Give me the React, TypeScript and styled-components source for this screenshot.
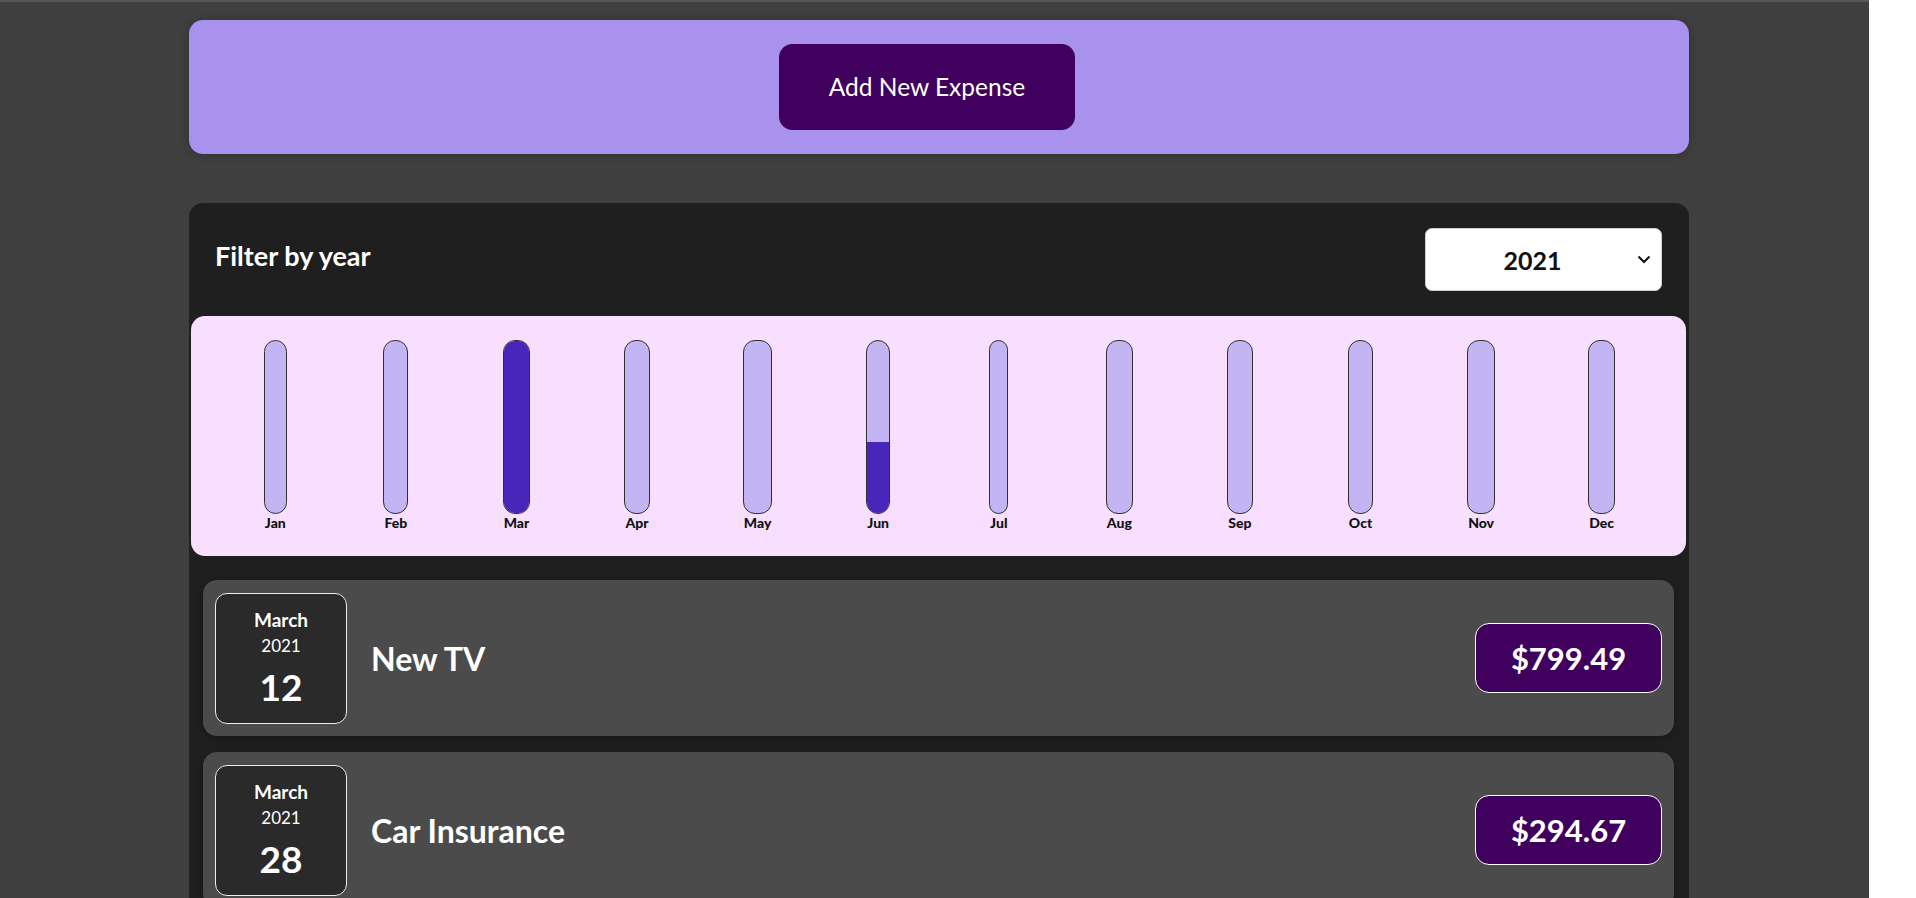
import React, { ChangeEvent, useState } from 'react';
import styled, { createGlobalStyle } from 'styled-components';

interface Expense {
	id: string;
	title: string;
	amount: number;
	date: Date;
}

const EXPENSES: Expense[] = [
	{ id: 'e1', title: 'New TV', amount: 799.49, date: new Date(2021, 2, 12) },
	{ id: 'e2', title: 'Car Insurance', amount: 294.67, date: new Date(2021, 2, 28) },
];

// fill level of each month bar, in percent
const CHART = [
	{ label: 'Jan', fill: 0 },
	{ label: 'Feb', fill: 0 },
	{ label: 'Mar', fill: 100 },
	{ label: 'Apr', fill: 0 },
	{ label: 'May', fill: 0 },
	{ label: 'Jun', fill: 41 },
	{ label: 'Jul', fill: 0 },
	{ label: 'Aug', fill: 0 },
	{ label: 'Sep', fill: 0 },
	{ label: 'Oct', fill: 0 },
	{ label: 'Nov', fill: 0 },
	{ label: 'Dec', fill: 0 },
];

const CHEVRON =
	"url(\"data:image/svg+xml;utf8,<svg xmlns='http://www.w3.org/2000/svg' width='14' height='9' viewBox='0 0 14 9'><path d='M1.5 1.5 L7 7 L12.5 1.5' fill='none' stroke='%23111' stroke-width='2'/></svg>\")";

const GlobalStyle = createGlobalStyle`
	html, body {
		margin: 0;
		padding: 0;
		background: #ffffff;
		overflow: hidden;
	}
	body {
		font-family: Lato, 'Noto Sans', sans-serif;
	}
	* {
		box-sizing: border-box;
	}
`;

const ExpenseDate = ({ date }: { date: Date }) => {
	const month = date.toLocaleString('en-US', { month: 'long' });
	return (
		<DateBox>
			<DateMonth>{month}</DateMonth>
			<DateYear>{date.getFullYear()}</DateYear>
			<DateDay>{date.getDate()}</DateDay>
		</DateBox>
	);
};

const App = () => {
	const [year, setYear] = useState('2021');

	const handleYearChange = (e: ChangeEvent<HTMLSelectElement>) => {
		setYear(e.target.value);
	};

	return (
		<Page>
			<GlobalStyle />
			<NewExpense>
				<AddButton type="button">Add New Expense</AddButton>
			</NewExpense>
			<Expenses>
				<FilterRow>
					<FilterLabel>Filter by year</FilterLabel>
					<YearSelect value={year} onChange={handleYearChange}>
						<option value="2022">2022</option>
						<option value="2021">2021</option>
						<option value="2020">2020</option>
						<option value="2019">2019</option>
					</YearSelect>
				</FilterRow>
				<Chart>
					{CHART.map((m) => (
						<ChartColumn key={m.label}>
							<BarStack>
								<BarInner>
									<BarFill style={{ height: `${m.fill}%` }} />
								</BarInner>
								<BarLabel>{m.label}</BarLabel>
							</BarStack>
						</ChartColumn>
					))}
				</Chart>
				<ExpenseList>
					{EXPENSES.map((item) => (
						<ExpenseItem key={item.id}>
							<ExpenseDate date={item.date} />
							<ItemTitle>{item.title}</ItemTitle>
							<Price>${item.amount}</Price>
						</ExpenseItem>
					))}
				</ExpenseList>
			</Expenses>
		</Page>
	);
};

export default App;

const Page = styled.div`
	width: 1869px;
	height: 898px;
	background-color: #3f3f3f;
	border-top: 2px solid #585858;
	padding: 18px 0 0 189px;
	overflow: hidden;
`;

const NewExpense = styled.div`
	width: 1500px;
	height: 134px;
	background-color: #a892ee;
	border-radius: 14px;
	box-shadow: 0 1px 8px rgba(0, 0, 0, 0.25);
	display: flex;
	align-items: center;
	justify-content: center;
	padding-right: 24px;
`;

const AddButton = styled.button`
	font-family: Lato, 'Noto Sans', sans-serif;
	font-size: 24.5px;
	line-height: 30px;
	color: #ffffff;
	background-color: #40005d;
	border: 1px solid #40005d;
	border-radius: 13px;
	padding: 27px 49px;
	cursor: pointer;
`;

const Expenses = styled.div`
	width: 1500px;
	margin-top: 49px;
	background-color: #1f1f1f;
	border-radius: 14px;
	padding: 25px 3px 20px 2px;
`;

const FilterRow = styled.div`
	display: flex;
	align-items: center;
	justify-content: space-between;
	padding: 0 24px;
`;

const FilterLabel = styled.label`
	color: #ffffff;
	font-weight: 700;
	font-size: 27px;
	margin-bottom: 8px;
`;

const YearSelect = styled.select`
	appearance: none;
	width: 237px;
	height: 63px;
	border: 1px solid #d0d0d0;
	border-radius: 7px;
	background-color: #ffffff;
	background-image: ${CHEVRON};
	background-repeat: no-repeat;
	background-position: right 10px center;
	font-family: Lato, 'Noto Sans', sans-serif;
	font-weight: 700;
	font-size: 25px;
	color: #111111;
	text-align: center;
	text-align-last: center;
	padding: 0 34px 0 12px;
`;

const Chart = styled.div`
	margin-top: 25px;
	height: 240px;
	background-color: #f8dfff;
	border-radius: 14px;
	padding: 24px;
	display: grid;
	grid-template-columns: repeat(12, 1fr);
`;

const ChartColumn = styled.div`
	display: flex;
	justify-content: center;
	height: 100%;
`;

const BarStack = styled.div`
	display: flex;
	flex-direction: column;
	height: 100%;
`;

const BarInner = styled.div`
	flex: 1;
	width: 100%;
	border: 1px solid #313131;
	border-radius: 12px;
	background-color: #c3b4f3;
	overflow: hidden;
	display: flex;
	flex-direction: column;
	justify-content: flex-end;
`;

const BarFill = styled.div`
	width: 100%;
	background-color: #4826b9;
`;

const BarLabel = styled.div`
	font-weight: 900;
	font-size: 14px;
	line-height: 18px;
	color: #111111;
	text-align: center;
	padding: 0 1px;
`;

const ExpenseList = styled.div`
	display: flex;
	flex-direction: column;
	gap: 16px;
	padding: 24px 12px 0;
`;

const ExpenseItem = styled.div`
	height: 156px;
	display: flex;
	align-items: center;
	padding: 12px;
	border-radius: 14px;
	background-color: #4b4b4b;
	box-shadow: 0 2px 8px rgba(0, 0, 0, 0.25);
`;

const DateBox = styled.div`
	width: 132px;
	height: 131px;
	flex-shrink: 0;
	display: flex;
	flex-direction: column;
	align-items: center;
	justify-content: center;
	border: 1px solid #ececec;
	border-radius: 12px;
	background-color: #2a2a2a;
	color: #ffffff;
`;

const DateMonth = styled.div`
	font-weight: 700;
	font-size: 19px;
	line-height: 26px;
`;

const DateYear = styled.div`
	font-size: 17px;
	line-height: 26px;
`;

const DateDay = styled.div`
	font-weight: 700;
	font-size: 37px;
	line-height: 44px;
	margin-top: 6px;
`;

const ItemTitle = styled.h2`
	flex: 1;
	margin: 0 24px;
	color: #ffffff;
	font-weight: 700;
	font-size: 32px;
`;

const Price = styled.div`
	width: 187px;
	height: 70px;
	display: flex;
	align-items: center;
	justify-content: center;
	font-weight: 700;
	font-size: 31px;
	color: #ffffff;
	background-color: #40005d;
	border: 1px solid #ffffff;
	border-radius: 14px;
`;
